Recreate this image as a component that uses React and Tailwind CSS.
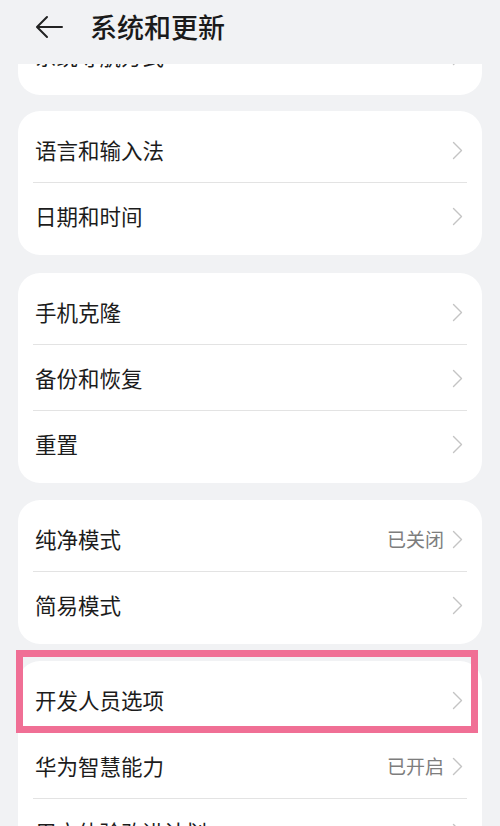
import React from 'react'

const font = { fontFamily: '"Noto Sans CJK SC", "Noto Sans", sans-serif' }

function Chevron() {
  return (
    <svg width="11" height="19" viewBox="0 0 11 19" fill="none" className="shrink-0">
      <path d="M1.5 1.5l8 8-8 8" stroke="#c4c4c4" strokeWidth="1.4" strokeLinecap="round" strokeLinejoin="round" />
    </svg>
  )
}

function Row({ label, value, last }) {
  return (
    <div className="relative flex h-[66px] items-center pl-[17px] pr-[19px]">
      <span className="flex-1 text-[21.5px] text-[#1c1c1c]">{label}</span>
      {value && <span className="mr-[8px] text-[19px] text-[#7d7d7d]">{value}</span>}
      <Chevron />
      {!last && <div className="absolute bottom-0 left-[15px] right-[15px] h-px bg-[#e3e3e3]" />}
    </div>
  )
}

function Card({ rows, className = '', children }) {
  return (
    <div className={`relative mx-[18px] shrink-0 rounded-[22px] bg-white py-[6px] ${className}`}>
      {rows.map((r, i) => (
        <Row key={r.label} label={r.label} value={r.value} last={i === rows.length - 1} />
      ))}
      {children}
    </div>
  )
}

export default function App() {
  return (
    <div className="flex h-[826px] w-[500px] flex-col overflow-hidden bg-[#f1f2f4]" style={font}>
      <div className="flex h-[64px] shrink-0 items-start pt-[8px]">
        <div className="flex h-[38px] items-center pl-[35px]">
          <svg width="29" height="24" viewBox="0 0 29 24" fill="none">
            <path d="M27 12H3M12 2L2 12l10 10" stroke="#222" strokeWidth="2" strokeLinecap="round" strokeLinejoin="round" />
          </svg>
          <span className="ml-[26px] text-[27px] font-medium text-[#1a1a1a]">系统和更新</span>
        </div>
      </div>

      <div className="flex min-h-0 flex-1 flex-col overflow-hidden">
        <Card className="mt-[-47px]" rows={[{ label: '系统导航方式' }]} />
        <Card className="mt-[16px]" rows={[{ label: '语言和输入法' }, { label: '日期和时间' }]} />
        <Card className="mt-[18px]" rows={[{ label: '手机克隆' }, { label: '备份和恢复' }, { label: '重置' }]} />
        <Card className="mt-[17px]" rows={[{ label: '纯净模式', value: '已关闭' }, { label: '简易模式' }]} />
        <Card
          className="mt-[17px]"
          rows={[{ label: '开发人员选项' }, { label: '华为智慧能力', value: '已开启' }, { label: '用户体验改进计划' }]}
        >
          <div className="pointer-events-none absolute left-[-2px] top-[-11px] h-[83px] w-[462px] border-[7px] border-[#f06f95]" />
        </Card>
      </div>
    </div>
  )
}
